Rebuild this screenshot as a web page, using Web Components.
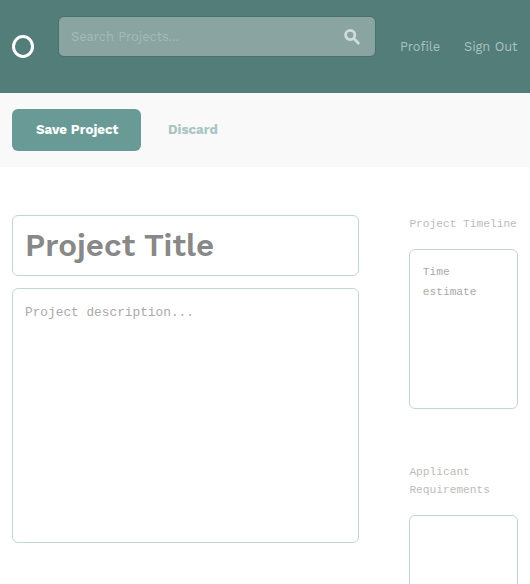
<!DOCTYPE html>
<html lang="en">
<head>
<meta charset="utf-8">
<title>New Project</title>
<style>
html, body { margin: 0; height: 584px; overflow: hidden; background: #fff; }
body { font-family: "Work Sans", "Noto Sans", sans-serif; font-size: 12.8px; }
</style>
</head>
<body>
<project-page></project-page>
<script>
function define(name, html) {
  const template = document.createElement('template');
  template.innerHTML = html;
  customElements.define(name, class extends HTMLElement {
    constructor() {
      super();
      this.attachShadow({ mode: 'open' }).append(template.content.cloneNode(true));
    }
  });
}

define('app-logo', `
<style>:host { display: block; width: 22px; height: 23px; } svg { display: block; }</style>
<svg width="22" height="23" viewBox="0 0 22 23"><ellipse cx="11" cy="11.5" rx="9.5" ry="10" fill="none" stroke="#fff" stroke-width="3"/></svg>`);

define('search-box', `
<style>
:host { display: flex; box-sizing: border-box; height: 41px; align-items: center; justify-content: space-between;
  padding: 0 15px 0 12px; border: 1px solid #48716d; border-radius: 6px; background: #8aa4a2; color: #a4bab8; }
span { line-height: 18px; }
svg { display: block; }
</style>
<span><slot></slot></span>
<svg width="16" height="16" viewBox="0 0 16 16" fill="none" stroke="#d0dbda"><circle cx="6.2" cy="6" r="4.6" stroke-width="2.8"/><path d="M9.5 9.3L15.2 15" stroke-width="2.8"/></svg>`);

define('nav-link', `
<style>:host { display: block; color: #a9c1be; line-height: 18px; white-space: nowrap; }</style>
<slot></slot>`);

define('app-header', `
<style>
:host { display: flex; box-sizing: border-box; height: 93px; padding: 16px 12px 0; background: #537d79; }
app-logo { margin: 19px 24px 0 0; }
search-box { width: 318px; }
nav { display: flex; flex: 1; justify-content: space-between; margin: 22px 0 0 24px; }
nav-link { width: 40px; }
nav-link + nav-link { width: 54px; }
</style>
<app-logo></app-logo><search-box>Search Projects...</search-box>
<nav><nav-link>Profile</nav-link><nav-link>Sign Out</nav-link></nav>`);

define('action-button', `
<style>
:host { display: flex; box-sizing: border-box; height: 42px; align-items: center; padding: 0 24px 2px; border-radius: 6px;
  color: #a9c5c2; font-size: 13.333px; font-weight: 700; white-space: nowrap; }
:host([primary]) { width: 129px; background: #699a96; color: #fff; }
</style>
<slot></slot>`);

define('action-bar', `
<style>:host { display: flex; box-sizing: border-box; height: 74px; padding: 16px 12px; gap: 3px; background: #f9f9f9; }</style>
<slot></slot>`);

define('text-field', `
<style>
:host { display: block; box-sizing: border-box; border: 1px solid #c2d7d5; border-radius: 6px; padding: 15px 12px;
  background: #fff; color: #a9a9a9; font: 12.8px/18px "Liberation Mono", monospace; }
:host([heading]) { height: 61px; padding: 0 12px; color: #888; font: 600 31.36px/59px "Work Sans", "Noto Sans", sans-serif; }
:host([small]) { padding: 12px 12.8px; font-size: 11.2px; line-height: 20px; }
</style>
<slot></slot>`);

define('side-section', `
<style>
:host { display: block; }
h2 { margin: 0 0 16px; padding-left: .4px; color: #bbb; font: 400 11.2px/18px "Liberation Mono", monospace; }
</style>
<h2><slot name="label"></slot></h2><slot></slot>`);

define('project-page', `
<style>
:host { display: block; height: 584px; overflow: hidden; }
main { display: grid; grid-template-columns: 347px 109px; column-gap: 50px; padding: 48px 12px 0; align-items: start; }
.editor { display: flex; flex-direction: column; gap: 12px; }
.description { height: 255px; }
aside { display: flex; flex-direction: column; gap: 54px; }
aside text-field { height: 160px; }
</style>
<app-header></app-header>
<action-bar><action-button primary>Save Project</action-button><action-button>Discard</action-button></action-bar>
<main>
  <div class="editor">
    <text-field heading>Project Title</text-field>
    <text-field class="description">Project description...</text-field>
  </div>
  <aside>
    <side-section><span slot="label">Project Timeline</span><text-field small>Time estimate</text-field></side-section>
    <side-section><span slot="label">Applicant Requirements</span><text-field small></text-field></side-section>
  </aside>
</main>`);
</script>
</body>
</html>
